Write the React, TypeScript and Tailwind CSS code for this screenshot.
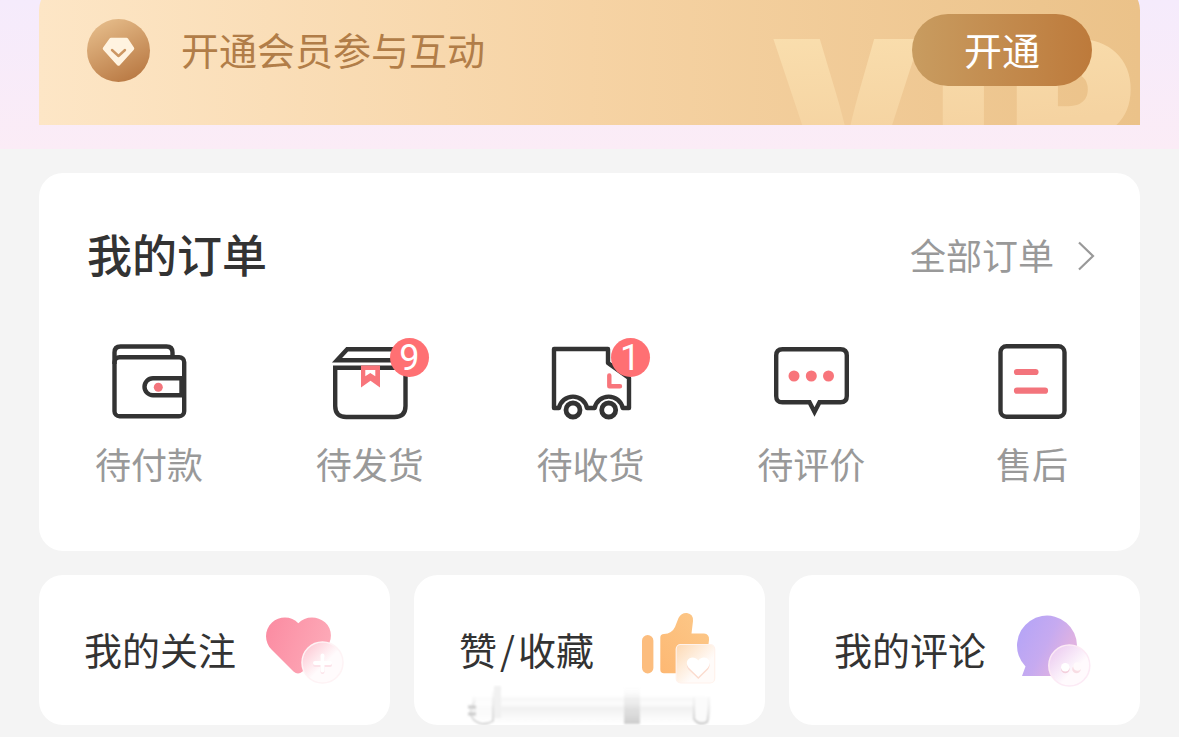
import type { ReactNode } from "react";

function DiamondIcon() {
  return (
    <svg viewBox="0 0 64 64" className="size-16 shrink-0" aria-hidden="true">
      <defs>
        <linearGradient id="coin" x1="0.2" y1="0" x2="0.7" y2="1">
          <stop offset="0" stopColor="#e6bd8b" />
          <stop offset="1" stopColor="#b97943" />
        </linearGradient>
      </defs>
      <circle cx="31.500" cy="32.500" r="31.500" fill="url(#coin)" />
      <path d="M24 21.500H39.500L45.500 30.500 31.500 46 17.500 30.500Z" fill="#fff3e0" stroke="#fff3e0" strokeWidth="3.500" strokeLinejoin="round" />
      <path d="M25 32L31.500 38 38 32" fill="none" stroke="#cd9763" strokeWidth="2.400" strokeLinecap="round" strokeLinejoin="round" />
    </svg>
  );
}

function OrderIcon({ children }: { children: ReactNode }) {
  return (
    <svg
      viewBox="0 0 80 80"
      className="size-20 overflow-visible"
      fill="none"
      stroke="#333333"
      strokeWidth="4.400"
      strokeLinejoin="round"
      aria-hidden="true"
    >
      {children}
    </svg>
  );
}

const wallet = (
  <OrderIcon>
    <rect x="5.500" y="15.200" width="69.700" height="59" rx="5" />
    <path d="M5.500 22V10.500Q5.500 4.500 11.500 4.500H57.500Q63.500 4.500 63.500 10.500V15" />
    <path d="M75 36.200H44A8.500 8.500 0 0 0 44 53.200H75" />
    <path d="M72.500 36V53" />
    <circle cx="49.300" cy="45.300" r="4.500" fill="#f3747c" stroke="none" />
  </OrderIcon>
);

const parcel = (
  <OrderIcon>
    <path d="M7 18.200L17.200 7.200H63L73.500 18.200Z" strokeLinejoin="miter" />
    <path d="M5.200 25.800H75.500V64Q75.500 75 64.500 75H16.200Q5.200 75 5.200 64Z" strokeLinejoin="miter" />
    <path d="M31 23.500H50V45.500L40.500 38.700 31 45.500Z" fill="#f8757b" stroke="none" />
    <path d="M35.300 28H45.300V34.300L40.300 31 35.300 34.300Z" fill="#ffffff" stroke="none" />
  </OrderIcon>
);

const truck = (
  <OrderIcon>
    <path d="M3 66V7H57V21L78 36V66H71.700A14.300 14.300 0 0 0 43.700 66H36A14.300 14.300 0 0 0 8 66Z" />
    <circle cx="22" cy="68" r="7" strokeWidth="4.800" />
    <circle cx="57.700" cy="68" r="7" strokeWidth="4.800" />
    <path d="M58.300 33.500V44.200H69" stroke="#f8757b" strokeLinecap="round" />
  </OrderIcon>
);

const comment = (
  <OrderIcon>
    <path d="M11.500 7.200H69.500Q75.800 7.200 75.800 13.500V54Q75.800 60.300 69.500 60.300H48.500L43.500 70 38.500 60.300H11.500Q5.200 60.300 5.200 54V13.500Q5.200 7.200 11.500 7.200Z" strokeLinejoin="miter" />
    <g fill="#f8757b" stroke="none">
      <circle cx="23" cy="34" r="5.500" />
      <circle cx="40.300" cy="34" r="5.500" />
      <circle cx="57.500" cy="34" r="5.500" />
    </g>
  </OrderIcon>
);

const afterSales = (
  <OrderIcon>
    <rect x="8.500" y="4.300" width="64" height="70.500" rx="6" />
    <path d="M25 30H43.500M25 48.700H53" stroke="#f3747c" strokeWidth="6.200" strokeLinecap="round" />
  </OrderIcon>
);

function HeartIcon() {
  return (
    <svg viewBox="0 0 80 80" className="mt-1 size-20 shrink-0" aria-hidden="true">
      <defs>
        <linearGradient id="heart" x1="0" y1="0.200" x2="1" y2="0.500">
          <stop offset="0" stopColor="#fb8ca2" />
          <stop offset="1" stopColor="#fdaab8" />
        </linearGradient>
        <linearGradient id="heartGlass" x1="0.100" y1="0.100" x2="0.550" y2="0.550">
          <stop offset="0" stopColor="#fdc9d4" />
          <stop offset="1" stopColor="#fffbfc" />
        </linearGradient>
      </defs>
      <path d="M33.300 11.300C27 4 14.500 3.500 7 10.500C-1 18 -.8 30 6.500 37.500L28.500 59.500Q33 63.500 37.500 59.500L60 37.500C68 29.500 67.800 17 60 10.300C52 3.500 40 4 33.300 11.300Z" fill="url(#heart)" />
      <circle cx="57.500" cy="50.500" r="20.500" fill="url(#heartGlass)" stroke="#fef3f5" strokeWidth="1.500" />
      <path d="M57.500 45.500V60M50 53H65" stroke="#fce3e9" strokeWidth="4" strokeLinecap="round" />
      <path d="M57.500 43.500V58.500M50 51H65" stroke="#ffffff" strokeWidth="4" strokeLinecap="round" />
    </svg>
  );
}

function ThumbIcon() {
  return (
    <svg viewBox="0 0 80 80" className="mt-1 size-20 shrink-0" aria-hidden="true">
      <defs>
        <linearGradient id="thumb" x1="1" y1="0" x2="0" y2="1">
          <stop offset="0" stopColor="#fcc98a" />
          <stop offset="1" stopColor="#fdb873" />
        </linearGradient>
        <linearGradient id="thumbGlass" x1="0" y1="0" x2="0.650" y2="0.650">
          <stop offset="0" stopColor="#fdd9b3" />
          <stop offset="1" stopColor="#fffbf9" />
        </linearGradient>
      </defs>
      <rect x="2" y="23" width="11.400" height="38.500" rx="5.700" fill="#fcbd7e" />
      <path d="M24 22Q32 21.500 35 15L38.500 6Q41.500 .5 47 1Q53.500 2 53 9L51.500 21.500H64Q69.500 22 69 28L65.500 57Q65 61.300 60.500 61.300H24Q20.300 61.300 20.300 57.500V25.500Q20.300 22.300 24 22Z" fill="url(#thumb)" />
      <rect x="36.200" y="32.500" width="38.500" height="38.500" rx="4.500" fill="url(#thumbGlass)" stroke="#fff2ec" strokeWidth="1.200" />
      <path d="M58.300 67L48.500 57.500C43 50.500 52.500 43.500 58.300 50.500C64 43.500 73.500 50.500 68 57.500Z" fill="#fbdccf" />
      <path d="M58.300 65L48.500 55.500C43 48.500 52.500 41.500 58.300 48.500C64 41.500 73.500 48.500 68 55.500Z" fill="#ffffff" />
    </svg>
  );
}

function BubbleIcon() {
  return (
    <svg viewBox="0 0 80 80" className="mt-1 size-20 shrink-0" aria-hidden="true">
      <defs>
        <linearGradient id="bubble" x1="0.150" y1="0.100" x2="0.900" y2="0.500">
          <stop offset="0" stopColor="#b7a5f6" />
          <stop offset="0.550" stopColor="#c6aaf0" />
          <stop offset="1" stopColor="#dfb2e2" />
        </linearGradient>
        <linearGradient id="bubbleGlass" x1="0.100" y1="0.050" x2="0.650" y2="0.600">
          <stop offset="0" stopColor="#ebcaf0" />
          <stop offset="1" stopColor="#fffafd" />
        </linearGradient>
      </defs>
      <path d="M7 64L10.500 54.500A30 30 0 1 1 40 62.500V64Z" fill="url(#bubble)" />
      <circle cx="54.300" cy="53.500" r="20.500" fill="url(#bubbleGlass)" stroke="#fceaf5" strokeWidth="1.500" />
      <circle cx="50.300" cy="57" r="4.300" fill="#f3cfdc" />
      <circle cx="50.300" cy="55.300" r="4.300" fill="#ffffff" />
      <circle cx="61.500" cy="57" r="4.300" fill="#f8dde4" />
      <circle cx="62.500" cy="54.500" r="4.300" fill="#fffafc" />
    </svg>
  );
}

function GlassBar() {
  return (
    <svg viewBox="0 0 248 40" className="pointer-events-none absolute bottom-0 left-[52px] h-10 w-[248px]" aria-hidden="true">
      <defs>
        <linearGradient id="bar" x1="0" y1="0" x2="0" y2="1">
          <stop offset="0.150" stopColor="#ffffff" />
          <stop offset="0.250" stopColor="#f7f7f7" />
          <stop offset="0.400" stopColor="#fcfcfc" />
          <stop offset="0.540" stopColor="#f1f1f1" />
          <stop offset="0.700" stopColor="#f6f6f6" />
          <stop offset="1" stopColor="#ffffff" />
        </linearGradient>
        <linearGradient id="post" x1="0" y1="0" x2="0" y2="1">
          <stop offset="0" stopColor="#dddddd" stopOpacity="0" />
          <stop offset="1" stopColor="#cccccc" />
        </linearGradient>
        <linearGradient id="rim" x1="0" y1="0" x2="0" y2="1">
          <stop offset="0" stopColor="#dddddd" stopOpacity="0.200" />
          <stop offset="1" stopColor="#bdbdbd" />
        </linearGradient>
        <filter id="soft">
          <feGaussianBlur stdDeviation="0.900" />
        </filter>
      </defs>
      <g filter="url(#soft)">
        <rect x="6" y="6" width="234" height="32" fill="url(#bar)" />
        <path d="M2 22H10M2 29H10" stroke="#b8b8b8" strokeWidth="3" opacity="0.700" />
        <path d="M9 16C4 22 3 30 8 35Q17 42 27 36V6" fill="none" stroke="url(#rim)" strokeWidth="1.400" />
        <rect x="10" y="5" width="16" height="31" fill="#ffffff" opacity="0.600" />
        <rect x="28" y="1" width="7" height="32" fill="#f1f1f1" />
        <rect x="158" y="3" width="16" height="36" fill="url(#post)" />
        <path d="M228 12V34Q233 41 241 37Q243 32 243 12" fill="#fbfbfb" stroke="url(#rim)" strokeWidth="1.800" />
      </g>
    </svg>
  );
}

function VipMark() {
  return (
    <svg viewBox="0 0 376 125" className="absolute bottom-0 right-0 h-[125px] w-[376px]" aria-hidden="true">
      <defs>
        <linearGradient id="vip" x1="0" y1="0" x2="0.150" y2="1">
          <stop offset="0" stopColor="#fbe2b2" />
          <stop offset="0.650" stopColor="#f5d3a1" />
        </linearGradient>
      </defs>
      <text
        x="8 172 246"
        y="178"
        fontFamily="Inter, sans-serif"
        fontWeight="900"
        fontSize="188"
        fill="url(#vip)"
        stroke="url(#vip)"
        strokeWidth="4"
      >
        VIP
      </text>
    </svg>
  );
}

const orders: { label: string; icon: ReactNode; badge?: number }[] = [
  { label: "待付款", icon: wallet },
  { label: "待发货", icon: parcel, badge: 9 },
  { label: "待收货", icon: truck, badge: 1 },
  { label: "待评价", icon: comment },
  { label: "售后", icon: afterSales },
];

const shortcuts: { id: string; label: ReactNode; icon: ReactNode; overlay?: ReactNode }[] = [
  { id: "follows", label: "我的关注", icon: <HeartIcon /> },
  {
    id: "likes",
    label: (
      <>
        赞<span className="mx-[3px]">/</span>收藏
      </>
    ),
    icon: <ThumbIcon />,
    overlay: <GlassBar />,
  },
  { id: "comments", label: "我的评论", icon: <BubbleIcon /> },
];

export default function App() {
  return (
    <div className="min-h-screen bg-[#f4f4f4] font-['Noto_Sans_CJK_SC',sans-serif] text-[#333333]">
      <header className="overflow-hidden bg-linear-to-b from-[#f5ebfc] to-[#fbecf6] px-[39px] pb-6">
        <section className="relative -mt-3.5 flex items-center justify-between overflow-hidden rounded-t-3xl bg-linear-to-r from-[#fde6c6] via-[#f6d3a4] to-[#ebc289] px-12 pb-[39px] pt-7">
          <VipMark />
          <div className="flex items-center gap-[30px]">
            <DiamondIcon />
            <p className="pb-0.5 text-[38px] leading-none text-[#b17d48]">开通会员参与互动</p>
          </div>
          <button
            type="button"
            className="relative h-[72px] w-[180px] rounded-full bg-linear-to-r from-[#c89c60] to-[#bd7a3b] pb-0.5 text-[38px] leading-none text-white"
          >
            开通
          </button>
        </section>
      </header>

      <main className="flex flex-col gap-6 px-[39px] pb-3 pt-6">
        <section className="rounded-3xl bg-white pb-[62px] pt-[53px]">
          <div className="flex items-center justify-between pl-12 pr-11">
            <h2 className="text-[45px] font-medium leading-14">我的订单</h2>
            <a href="#orders" className="flex items-center gap-[22px] text-[36px] leading-14 text-[#999999]">
              全部订单
              <svg viewBox="0 0 20 32" className="mt-1 h-8 w-5" fill="none" stroke="#999999" strokeWidth="2.200" aria-hidden="true">
                <path d="M3 2.500L17 16 3 29.500" />
              </svg>
            </a>
          </div>
          <nav className="mt-[60px] flex justify-between pl-[54px] pr-[52px]">
            {orders.map((order) => (
              <a key={order.label} href="#orders" className="flex w-28 flex-col items-center gap-[15px]">
                <span className="relative">
                  {order.icon}
                  {order.badge !== undefined && (
                    <span className="absolute -top-1 left-[60px] flex size-[39px] items-center justify-center rounded-full bg-[#ff7073] font-['Roboto',sans-serif] text-[36px] leading-none text-white">
                      {order.badge}
                    </span>
                  )}
                </span>
                <span className="text-[36px] leading-[52px] text-[#999999]">{order.label}</span>
              </a>
            ))}
          </nav>
        </section>

        <nav className="grid grid-cols-3 gap-6">
          {shortcuts.map((item) => (
            <a
              key={item.id}
              href={`#${item.id}`}
              className="relative flex h-[150px] items-center justify-between rounded-3xl bg-white px-[45px]"
            >
              <span className="pb-0.5 text-[38px] leading-none">{item.label}</span>
              {item.icon}
              {item.overlay}
            </a>
          ))}
        </nav>
      </main>
    </div>
  );
}
